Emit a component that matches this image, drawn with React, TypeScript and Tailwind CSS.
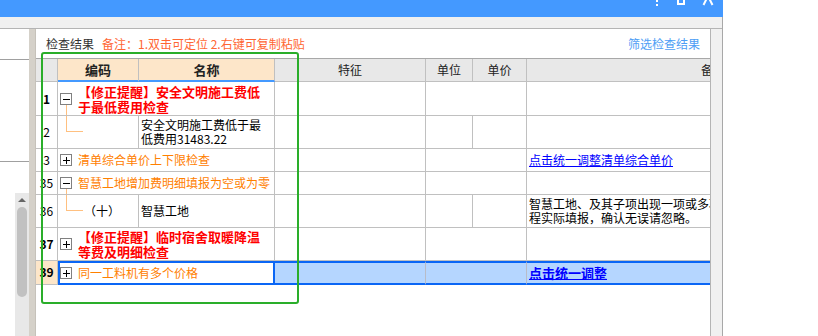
import React from "react";

const GRID = "grid grid-cols-[22px_81px_136px_151px_47px_54px_372px]";

function Toggle({ open, line }: { open: boolean; line?: boolean }) {
  return (
    <div className="flex flex-col items-start w-[12px] self-stretch shrink-0">
      <div className="flex-1" />
      <svg width="12" height="12" viewBox="0 0 12 12" className="block">
        <rect x="0.5" y="0.5" width="11" height="11" fill="#fff" stroke="#808080" />
        <rect x="3" y="6" width="7" height="1" fill="#000" />
        {!open && <rect x="6" y="3" width="1" height="7" fill="#000" />}
      </svg>
      <div className={line ? "flex-1 w-[7px] border-r border-r-[#ffc080]" : "flex-1"} />
    </div>
  );
}

function Num({ children, bold }: { children: React.ReactNode; bold?: boolean }) {
  return (
    <div className={`border-r border-r-[#c0c0c0] flex items-center justify-center text-[12px] text-black ${bold ? "font-bold" : ""}`}>
      {children}
    </div>
  );
}

function Cell({ children, className = "" }: { children?: React.ReactNode; className?: string }) {
  return <div className={`border-r border-r-[#c0c0c0] ${className}`}>{children}</div>;
}

export default function App() {
  return (
    <div className="w-[818px] h-[336px] bg-white flex overflow-hidden font-['Noto_Sans_CJK_SC',sans-serif]">
      <div className="w-[723px] flex flex-col">
        {/* title bar, cut at the top */}
        <div className="h-[17px] bg-[#4499ff] flex justify-end pr-[8px]">
          <svg width="70" height="17" viewBox="0 0 70 17">
            <rect x="11" y="0" width="2" height="2" fill="#fff" />
            <rect x="11" y="4" width="2" height="2" fill="#fff" />
            <rect x="32" y="0" width="2" height="5" fill="#fff" />
            <rect x="38" y="0" width="2" height="5" fill="#fff" />
            <rect x="32" y="3" width="8" height="2" fill="#fff" />
            <path d="M63 -4 L58.5 5 M63 -4 L67.5 5" stroke="#fff" strokeWidth="2" fill="none" />
          </svg>
        </div>

        <div className="flex-1 flex flex-col bg-[#f0f0f0] border-r border-r-[#a8a8a8]">
          <div className="h-[11px]" />
          <div className="flex-1 flex border-t border-t-[#b4b4b4] min-h-0">
            {/* left panel */}
            <div className="w-[29px] bg-white flex flex-col">
              <div className="h-[31px] border-b border-b-[#a0a0a0]" />
              <div className="h-[102px] border-b border-b-[#a0a0a0]" />
              <div className="h-[31px]" />
              <div className="flex-1 w-[14px] self-end bg-[#e8e8e8] flex flex-col items-center pt-[5px]">
                <svg width="8" height="4" viewBox="0 0 8 4">
                  <path d="M0 4 L4 0 L8 4 Z" fill="#666" />
                </svg>
                <div className="mt-[5px] w-[10px] h-[90px] rounded-full bg-[#c1c1c1]" />
              </div>
            </div>
            <div className="w-[7px] bg-[#d5d1c9] border-r border-r-[#c6c2ba]" />

            {/* main panel */}
            <div className="w-[675px] bg-white border-r border-r-[#b4b4b4] overflow-hidden relative flex flex-col">
              <div className="h-[29px] flex items-center px-[10px] text-[12px] shrink-0">
                <span className="text-[#333]">检查结果</span>
                <span className="ml-[8px] text-[#ff6633]">备注：1.双击可定位 2.右键可复制粘贴</span>
                <span className="ml-auto text-[#4d9ef5]">筛选检查结果</span>
              </div>

              {/* header */}
              <div className={`${GRID} h-[24px] border-t border-t-[#a8a8a8] text-[#222] shrink-0`}>
                <div className="bg-[#e8e8e8] border-r border-r-[#c0c0c0] border-b border-b-[#c0c0c0]" />
                <div className="bg-[#fde6c9] border-r border-r-[#c0c0c0] border-b-2 border-b-[#4499ff] flex items-center justify-center font-bold text-[13px]">编码</div>
                <div className="bg-[#fde6c9] border-r border-r-[#c0c0c0] border-b-2 border-b-[#4499ff] flex items-center justify-center font-bold text-[13px]">名称</div>
                <div className="bg-[#e8e8e8] border-r border-r-[#c0c0c0] border-b border-b-[#c0c0c0] flex items-center justify-center text-[12px]">特征</div>
                <div className="bg-[#e8e8e8] border-r border-r-[#c0c0c0] border-b border-b-[#c0c0c0] flex items-center justify-center text-[12px]">单位</div>
                <div className="bg-[#e8e8e8] border-r border-r-[#c0c0c0] border-b border-b-[#c0c0c0] flex items-center justify-center text-[12px]">单价</div>
                <div className="bg-[#e8e8e8] border-b border-b-[#c0c0c0] flex items-center justify-center text-[12px]">备注</div>
              </div>

              {/* row 1 */}
              <div className={`${GRID} h-[34px] border-b border-b-[#c0c0c0] shrink-0`}>
                <Num bold>1</Num>
                <Cell className="col-span-2 flex pl-[2px]">
                  <Toggle open line />
                  <div className="ml-[6px] self-center text-[13px] leading-[15px] font-bold text-[#ff0000] whitespace-nowrap">
                    【修正提醒】安全文明施工费低<br />于最低费用检查
                  </div>
                </Cell>
                <Cell />
                <Cell className="col-span-2" />
                <div />
              </div>

              {/* row 2 */}
              <div className={`${GRID} h-[33px] border-b border-b-[#c0c0c0] shrink-0`}>
                <Num>2</Num>
                <Cell>
                  <div className="ml-[8px] w-[17px] h-[16px] border-l border-b border-[#ffc080]" />
                </Cell>
                <Cell className="flex items-center pl-[2px]">
                  <div className="text-[12px] leading-[14px] text-black whitespace-nowrap">
                    安全文明施工费低于最<br />低费用31483.22
                  </div>
                </Cell>
                <Cell />
                <Cell />
                <Cell />
                <div />
              </div>

              {/* row 3 */}
              <div className={`${GRID} h-[23px] border-b border-b-[#c0c0c0] shrink-0`}>
                <Num>3</Num>
                <Cell className="col-span-2 flex pl-[2px]">
                  <Toggle open={false} />
                  <div className="ml-[6px] self-center text-[12px] text-[#ff8000] whitespace-nowrap">清单综合单价上下限检查</div>
                </Cell>
                <Cell />
                <Cell className="col-span-2" />
                <div className="flex items-center pl-[2px] text-[12px] text-[#0000ff] underline whitespace-nowrap">点击统一调整清单综合单价</div>
              </div>

              {/* row 35 */}
              <div className={`${GRID} h-[23px] border-b border-b-[#c0c0c0] shrink-0`}>
                <Num>35</Num>
                <Cell className="col-span-2 flex pl-[2px]">
                  <Toggle open line />
                  <div className="ml-[6px] self-center text-[12px] text-[#ff8000] whitespace-nowrap">智慧工地增加费明细填报为空或为零</div>
                </Cell>
                <Cell />
                <Cell className="col-span-2" />
                <div />
              </div>

              {/* row 36 */}
              <div className={`${GRID} h-[33px] border-b border-b-[#c0c0c0] shrink-0`}>
                <Num>36</Num>
                <Cell className="flex">
                  <div className="ml-[8px] w-[17px] h-[16px] border-l border-b border-[#ffc080] self-start shrink-0" />
                  <div className="self-center ml-[1px] text-[12px] text-black whitespace-nowrap">（十）</div>
                </Cell>
                <Cell className="flex items-center pl-[2px]">
                  <div className="text-[12px] text-black">智慧工地</div>
                </Cell>
                <Cell />
                <Cell />
                <Cell />
                <div className="flex items-center pl-[2px]">
                  <div className="text-[12px] leading-[14px] text-black whitespace-nowrap">
                    智慧工地、及其子项出现一项或多项费用为空或为零，请按工<br />程实际填报，确认无误请忽略。
                  </div>
                </div>
              </div>

              {/* row 37 */}
              <div className={`${GRID} h-[33px] border-b border-b-[#c0c0c0] shrink-0`}>
                <Num bold>37</Num>
                <Cell className="col-span-2 flex pl-[2px]">
                  <Toggle open={false} />
                  <div className="ml-[6px] self-center text-[13px] leading-[15px] font-bold text-[#ff0000] whitespace-nowrap">
                    【修正提醒】临时宿舍取暖降温<br />等费及明细检查
                  </div>
                </Cell>
                <Cell />
                <Cell className="col-span-2" />
                <div />
              </div>

              {/* row 39, selected */}
              <div className={`${GRID} h-[23px] shrink-0`}>
                <div className="bg-[#fde6c9] border-r border-r-[#c0c0c0] border-b border-b-[#c0c0c0] flex items-center justify-center text-[12px] font-bold text-black">39</div>
                <div className="col-span-2 bg-white border-2 border-[#0a66f5] flex">
                  <Toggle open={false} />
                  <div className="ml-[6px] self-center text-[12px] text-[#ff8000] whitespace-nowrap">同一工料机有多个价格</div>
                </div>
                <div className="bg-[#b5d6ff] border-y-2 border-y-[#0a66f5] border-r border-r-[#b8bcc8]" />
                <div className="col-span-2 bg-[#b5d6ff] border-y-2 border-y-[#0a66f5] border-r border-r-[#b8bcc8]" />
                <div className="bg-[#b5d6ff] border-y-2 border-y-[#0a66f5] flex items-center pl-[2px] text-[13px] font-bold text-[#0000ff] underline whitespace-nowrap">点击统一调整</div>
              </div>

              {/* green annotation frame */}
              <div className="absolute left-[5px] top-[23px] w-[258px] h-[252px] border-2 border-[#2aae2a] rounded-[3px] pointer-events-none" />
            </div>

            <div className="flex-1" />
          </div>
        </div>
      </div>
      <div className="flex-1 bg-white" />
    </div>
  );
}
